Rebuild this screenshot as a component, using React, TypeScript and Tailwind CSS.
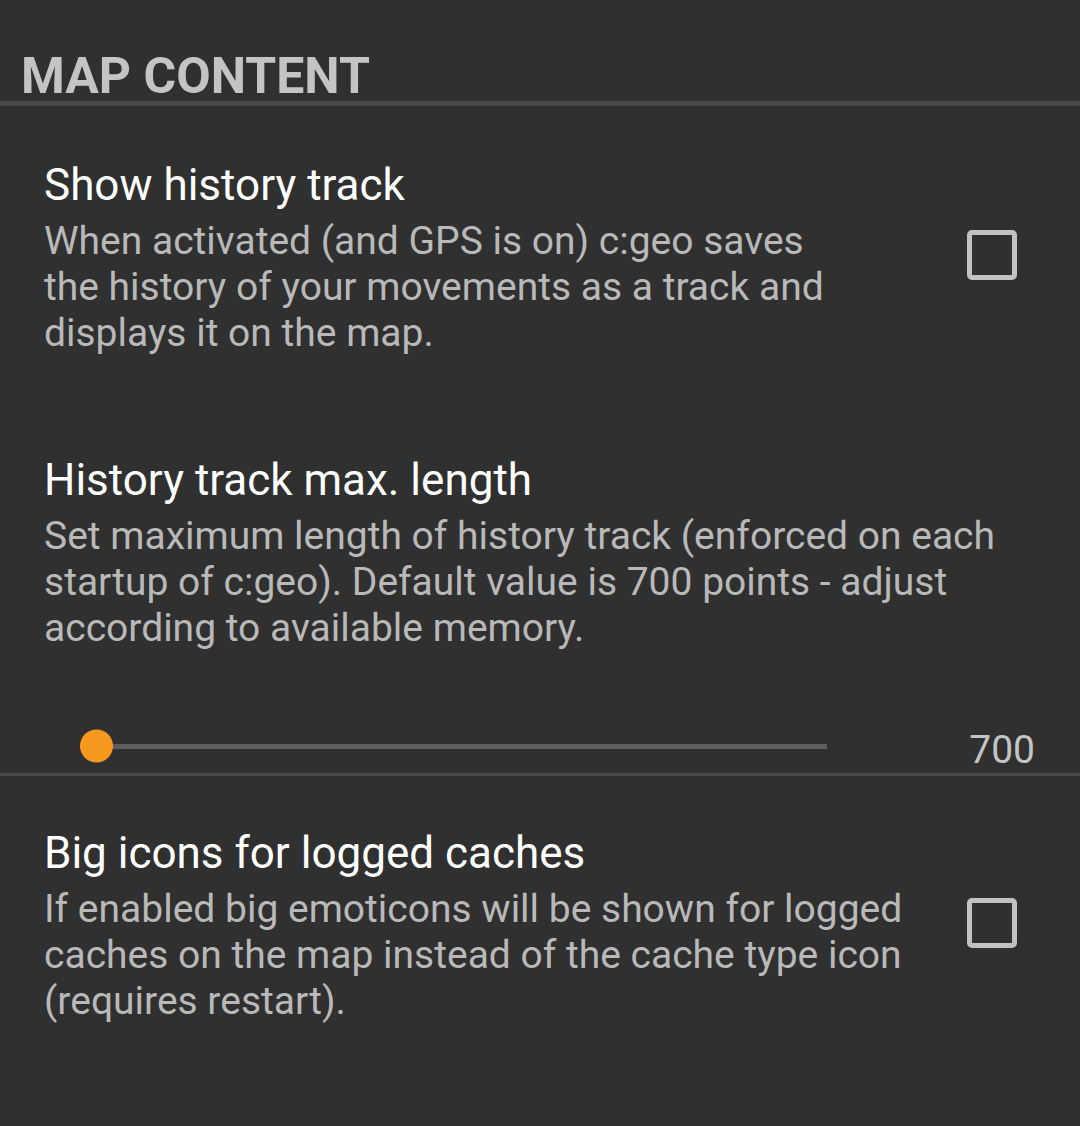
const font = { fontFamily: "Roboto, 'Noto Sans', sans-serif" };

function CheckBox() {
  return (
    <div className="w-[50px] h-[50px] shrink-0 mb-[6px] rounded-[5px] border-[5px] border-[#c2c2c2]" />
  );
}

function Summary({ lines }: { lines: string[] }) {
  return (
    <div className="mt-[7px] text-[39px] leading-[46px] text-[#b9b9b9] whitespace-nowrap">
      {lines.map((l, i) => (
        <div key={i}>{l}</div>
      ))}
    </div>
  );
}

export default function App() {
  return (
    <div className="min-h-screen w-full bg-[#303030]" style={font}>
      <div className="pt-[51px] pl-[21px] text-[50px] leading-[50px] font-bold text-[#c4c4c4]">
        MAP CONTENT
      </div>
      <div className="h-[5px] bg-[#484848]" />

      <div className="flex items-center pl-[44px] pr-[63px] pt-[53px] pb-[49px]">
        <div className="flex-1">
          <div className="text-[44px] leading-[52px] text-white">Show history track</div>
          <Summary
            lines={[
              "When activated (and GPS is on) c:geo saves",
              "the history of your movements as a track and",
              "displays it on the map.",
            ]}
          />
        </div>
        <CheckBox />
      </div>

      <div className="pl-[44px] pr-[45px] pt-[49px]">
        <div className="text-[44px] leading-[52px] text-white">History track max. length</div>
        <Summary
          lines={[
            "Set maximum length of history track (enforced on each",
            "startup of c:geo). Default value is 700 points - adjust",
            "according to available memory.",
          ]}
        />
      </div>

      <div className="mt-[71px] h-[48px] flex items-center pl-[80px] pr-[45px]">
        <div className="relative w-[747px] h-[5px] bg-[#5e5e5e]">
          <div className="absolute left-0 top-1/2 -translate-y-1/2 w-[33px] h-[33px] rounded-full bg-[#f8991f]" />
        </div>
        <div className="ml-auto pt-[8px] text-[39px] leading-[46px] text-[#c4c4c4]">700</div>
      </div>
      <div className="mt-[3px] h-[3px] bg-[#484848]" />

      <div className="flex items-center pl-[44px] pr-[63px] pt-[51px] pb-[60px]">
        <div className="flex-1">
          <div className="text-[44px] leading-[52px] text-white">Big icons for logged caches</div>
          <Summary
            lines={[
              "If enabled big emoticons will be shown for logged",
              "caches on the map instead of the cache type icon",
              "(requires restart).",
            ]}
          />
        </div>
        <CheckBox />
      </div>
    </div>
  );
}
